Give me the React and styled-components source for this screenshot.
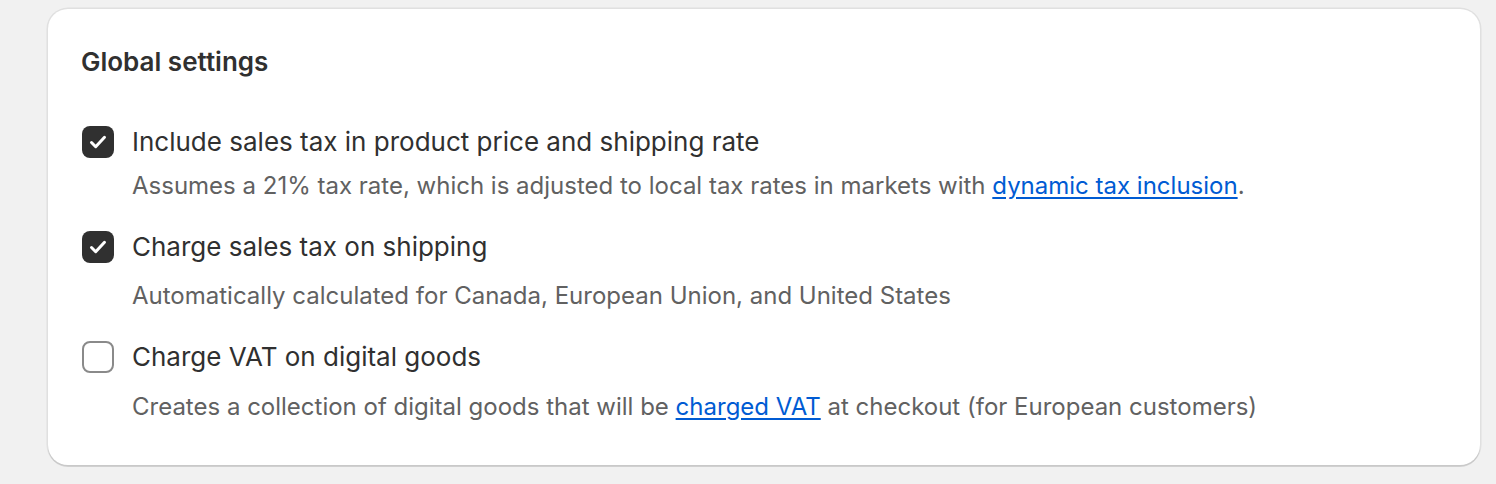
import React from 'react';
import styled, { createGlobalStyle } from 'styled-components';

const GlobalStyle = createGlobalStyle`
  html, body {
    margin: 0;
    padding: 0;
    background: #f1f1f1;
    font-family: Inter, "Noto Sans", sans-serif;
    -webkit-font-smoothing: antialiased;
  }
`;

const Page = styled.div`
  padding: 9px 16px 18px 48px;
`;

const Card = styled.section`
  background: #fff;
  border-radius: 20px;
  padding: 33px 34px 38px 33px;
  box-shadow: 0 2px 0 0 rgba(0, 0, 0, 0.1), 0 0 0 1.5px rgba(0, 0, 0, 0.07);
`;

const Title = styled.h2`
  margin: 0 0 40px;
  font-size: 26px;
  line-height: 40px;
  font-weight: 600;
  color: #303030;
`;

const List = styled.div`
  display: flex;
  flex-direction: column;
  gap: 21px;
`;

const Option = styled.label`
  display: grid;
  grid-template-columns: 33px 1fr;
  column-gap: 18px;
  align-items: center;
  cursor: pointer;
`;

const Box = styled.span`
  width: 32px;
  height: 32px;
  margin-left: 1px;
  box-sizing: border-box;
  border-radius: 8px;
  display: flex;
  align-items: center;
  justify-content: center;
  background: ${(p) => (p.$checked ? '#303030' : '#fff')};
  border: ${(p) => (p.$checked ? 'none' : '2px solid #8a8a8a')};
`;

const Label = styled.span`
  font-size: 26px;
  line-height: 40px;
  color: #303030;
`;

const Help = styled.p`
  grid-column: 2;
  margin: ${(p) => p.$gap}px 0 0;
  font-size: 24px;
  line-height: 40px;
  color: #616161;

  a {
    color: #005bd3;
    text-decoration: underline;
    text-underline-offset: 3px;
  }
`;

const Check = () => (
  <svg width="32" height="32" viewBox="0 0 32 32" fill="none">
    <path d="M9.5 16.5l4.2 4.2 8.8-9.4" stroke="#fff" strokeWidth="3" strokeLinecap="round" strokeLinejoin="round" />
  </svg>
);

const options = [
  {
    label: 'Include sales tax in product price and shipping rate',
    checked: true,
    gap: 4,
    help: (
      <>
        Assumes a 21% tax rate, which is adjusted to local tax rates in markets with{' '}
        <a href="#">dynamic tax inclusion</a>.
      </>
    ),
  },
  {
    label: 'Charge sales tax on shipping',
    checked: true,
    gap: 9,
    help: 'Automatically calculated for Canada, European Union, and United States',
  },
  {
    label: 'Charge VAT on digital goods',
    checked: false,
    gap: 10,
    help: (
      <>
        Creates a collection of digital goods that will be <a href="#">charged VAT</a> at checkout (for
        European customers)
      </>
    ),
  },
];

export default function App() {
  return (
    <Page>
      <GlobalStyle />
      <Card>
        <Title>Global settings</Title>
        <List>
          {options.map((o) => (
            <Option key={o.label}>
              <Box $checked={o.checked}>{o.checked && <Check />}</Box>
              <Label>{o.label}</Label>
              <Help $gap={o.gap}>{o.help}</Help>
            </Option>
          ))}
        </List>
      </Card>
    </Page>
  );
}
